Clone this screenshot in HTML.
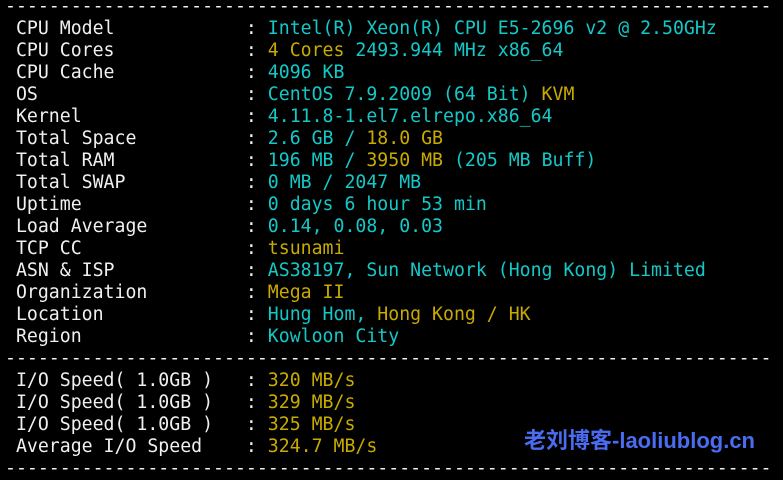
<!DOCTYPE html>
<html><head><style>
html,body{margin:0;padding:0;background:#000;width:783px;height:475px;overflow:hidden}
pre{margin:0;position:absolute;left:5px;top:-4px;font-family:"DejaVu Sans Mono","Liberation Mono",monospace;font-size:18.2px;line-height:22px;color:#f0f0f0;white-space:pre}
.c{color:#14c8c8}.y{color:#c8aa00}
.wm{position:absolute;left:524px;top:423px;font-family:"Liberation Sans","Noto Sans CJK SC",sans-serif;font-size:22px;font-weight:bold;color:#4a6cf0;letter-spacing:0px}
</style></head><body>
<pre>----------------------------------------------------------------------
 CPU Model            : <span class="c">Intel(R) Xeon(R) CPU E5-2696 v2 @ 2.50GHz</span>
 CPU Cores            : <span class="y">4 Cores</span> <span class="c">2493.944 MHz x86_64</span>
 CPU Cache            : <span class="c">4096 KB</span>
 OS                   : <span class="c">CentOS 7.9.2009 (64 Bit)</span> <span class="y">KVM</span>
 Kernel               : <span class="c">4.11.8-1.el7.elrepo.x86_64</span>
 Total Space          : <span class="c">2.6 GB / </span><span class="y">18.0 GB</span>
 Total RAM            : <span class="c">196 MB / </span><span class="y">3950 MB</span><span class="c"> (205 MB Buff)</span>
 Total SWAP           : <span class="c">0 MB / 2047 MB</span>
 Uptime               : <span class="c">0 days 6 hour 53 min</span>
 Load Average         : <span class="c">0.14, 0.08, 0.03</span>
 TCP CC               : <span class="y">tsunami</span>
 ASN &amp; ISP            : <span class="c">AS38197, Sun Network (Hong Kong) Limited</span>
 Organization         : <span class="y">Mega II</span>
 Location             : <span class="c">Hung Hom, </span><span class="y">Hong Kong / HK</span>
 Region               : <span class="c">Kowloon City</span>
----------------------------------------------------------------------
 I/O Speed( 1.0GB )   : <span class="y">320 MB/s</span>
 I/O Speed( 1.0GB )   : <span class="y">329 MB/s</span>
 I/O Speed( 1.0GB )   : <span class="y">325 MB/s</span>
 Average I/O Speed    : <span class="y">324.7 MB/s</span>
----------------------------------------------------------------------</pre>
<div class="wm">老刘博客-laoliublog.cn</div>
</body></html>
